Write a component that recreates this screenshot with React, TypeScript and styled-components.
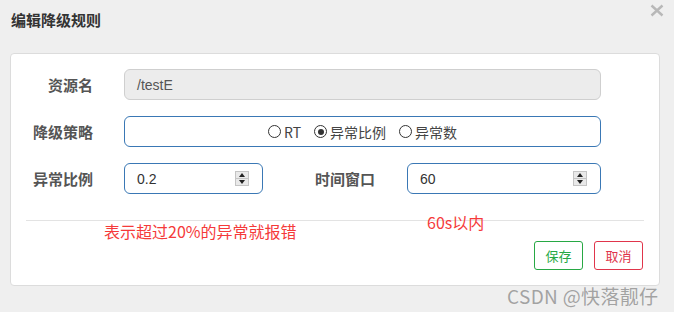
import styled, { createGlobalStyle } from "styled-components";

const GlobalStyle = createGlobalStyle`
  html, body {
    margin: 0;
    padding: 0;
    background: #efefef;
  }
`;

const CJK = `"Noto Sans CJK SC", "Noto Sans", sans-serif`;
const LATIN = `"Liberation Sans", "Noto Sans CJK SC", sans-serif`;

const Page = styled.div`
  position: relative;
  width: 674px;
  height: 312px;
  background: #efefef;
  overflow: hidden;
  font-family: ${CJK};
`;

const Header = styled.div`
  height: 53px;
  box-sizing: border-box;
  padding: 10px 10px 0 11px;
  display: flex;
  justify-content: space-between;
  align-items: flex-start;
`;

const Title = styled.div`
  font-size: 15px;
  line-height: 20px;
  font-weight: 700;
  color: #333;
`;

const Close = styled.svg`
  margin-top: -6px;
  margin-right: 0;
`;

const Card = styled.div`
  position: relative;
  margin-left: 10px;
  width: 650px;
  height: 233px;
  box-sizing: border-box;
  background: #fff;
  border: 1px solid #dcdcdc;
  border-radius: 4px;
  padding-top: 15px;
`;

const Form = styled.div`
  display: flex;
  flex-direction: column;
  gap: 16px;
`;

const Row = styled.div`
  display: flex;
  align-items: center;
  height: 31px;
`;

const Label = styled.div<{ $w: number; $gap: number }>`
  width: ${(p) => p.$w}px;
  margin-right: ${(p) => p.$gap}px;
  text-align: right;
  font-size: 15px;
  font-weight: 700;
  color: #555;
`;

const Input = styled.div<{ $w: number; $disabled?: boolean }>`
  position: relative;
  width: ${(p) => p.$w}px;
  height: 31px;
  box-sizing: border-box;
  border: 1px solid ${(p) => (p.$disabled ? "#cfcfcf" : "#3a78b5")};
  background: ${(p) => (p.$disabled ? "#ececec" : "#fff")};
  border-radius: 6px;
  padding-left: 12px;
  display: flex;
  align-items: center;
  font-family: ${LATIN};
  font-size: 14px;
  color: ${(p) => (p.$disabled ? "#555" : "#333")};
`;

const RadioGroup = styled.div`
  flex: 1;
  display: flex;
  justify-content: center;
  align-items: center;
  gap: 13px;
  padding-right: 12px;
`;

const RadioItem = styled.div`
  display: flex;
  align-items: center;
  gap: 3px;
  font-family: ${CJK};
  font-size: 14px;
  color: #444;
`;

const Circle = styled.span<{ $on?: boolean }>`
  width: 13px;
  height: 13px;
  box-sizing: border-box;
  border: 1.5px solid #333;
  border-radius: 50%;
  display: flex;
  align-items: center;
  justify-content: center;
  &::after {
    content: "";
    width: 6px;
    height: 6px;
    border-radius: 50%;
    background: ${(p) => (p.$on ? "#333" : "transparent")};
  }
`;

const Spinner = styled.span`
  position: absolute;
  right: 13px;
  top: 7px;
  width: 14px;
  height: 15px;
  box-sizing: border-box;
  border: 1px solid #c4c4c4;
  background: #e9e9e9;
  display: flex;
  flex-direction: column;
`;

const SpinHalf = styled.span<{ $down?: boolean }>`
  flex: 1;
  display: flex;
  align-items: center;
  justify-content: center;
  border-top: ${(p) => (p.$down ? "1px solid #c4c4c4" : "none")};
  &::after {
    content: "";
    border-left: 3px solid transparent;
    border-right: 3px solid transparent;
    ${(p) => (p.$down ? "border-top: 4px solid #222;" : "border-bottom: 4px solid #222;")}
  }
`;

const Divider = styled.div`
  margin: 26px 15px 0;
  height: 1px;
  background: #e3e3e3;
`;

const Footer = styled.div`
  display: flex;
  justify-content: flex-end;
  gap: 11px;
  padding: 20px 16px 0 0;
`;

const Button = styled.div<{ $color: string }>`
  width: 49px;
  height: 29px;
  box-sizing: border-box;
  border: 1px solid ${(p) => p.$color};
  border-radius: 3px;
  color: ${(p) => p.$color};
  background: #fff;
  font-size: 13px;
  display: flex;
  align-items: center;
  justify-content: center;
`;

const Note = styled.div<{ $x: number; $y: number }>`
  position: absolute;
  left: ${(p) => p.$x}px;
  top: ${(p) => p.$y}px;
  font-size: 16px;
  line-height: 20px;
  color: #f53a3a;
  white-space: nowrap;
`;

const Watermark = styled.div`
  position: absolute;
  left: 507px;
  top: 284px;
  font-size: 19px;
  line-height: 24px;
  letter-spacing: 0.35px;
  color: rgba(110, 110, 110, 0.6);
  white-space: nowrap;
`;

function NumberInput({ w, value }: { w: number; value: string }) {
  return (
    <Input $w={w}>
      {value}
      <Spinner>
        <SpinHalf />
        <SpinHalf $down />
      </Spinner>
    </Input>
  );
}

export default function App() {
  return (
    <Page>
      <GlobalStyle />
      <Header>
        <Title>编辑降级规则</Title>
        <Close width="14" height="13" viewBox="0 0 14 13">
          <path d="M1.5 1.5 L12.5 11.5 M12.5 1.5 L1.5 11.5" stroke="#b8b8b8" strokeWidth="2.4" />
        </Close>
      </Header>
      <Card>
        <Form>
          <Row>
            <Label $w={82} $gap={31}>资源名</Label>
            <Input $w={477} $disabled>/testE</Input>
          </Row>
          <Row>
            <Label $w={82} $gap={31}>降级策略</Label>
            <Input $w={477}>
              <RadioGroup>
                <RadioItem><Circle />RT</RadioItem>
                <RadioItem><Circle $on />异常比例</RadioItem>
                <RadioItem><Circle />异常数</RadioItem>
              </RadioGroup>
            </Input>
          </Row>
          <Row>
            <Label $w={82} $gap={31}>异常比例</Label>
            <NumberInput w={139} value="0.2" />
            <Label $w={112} $gap={32}>时间窗口</Label>
            <NumberInput w={194} value="60" />
          </Row>
        </Form>
        <Divider />
        <Footer>
          <Button $color="#27a844">保存</Button>
          <Button $color="#e0354b">取消</Button>
        </Footer>
        <Note $x={93} $y={167}>表示超过20%的异常就报错</Note>
        <Note $x={416} $y={158}>60s以内</Note>
      </Card>
      <Watermark>CSDN @快落靓仔</Watermark>
    </Page>
  );
}
